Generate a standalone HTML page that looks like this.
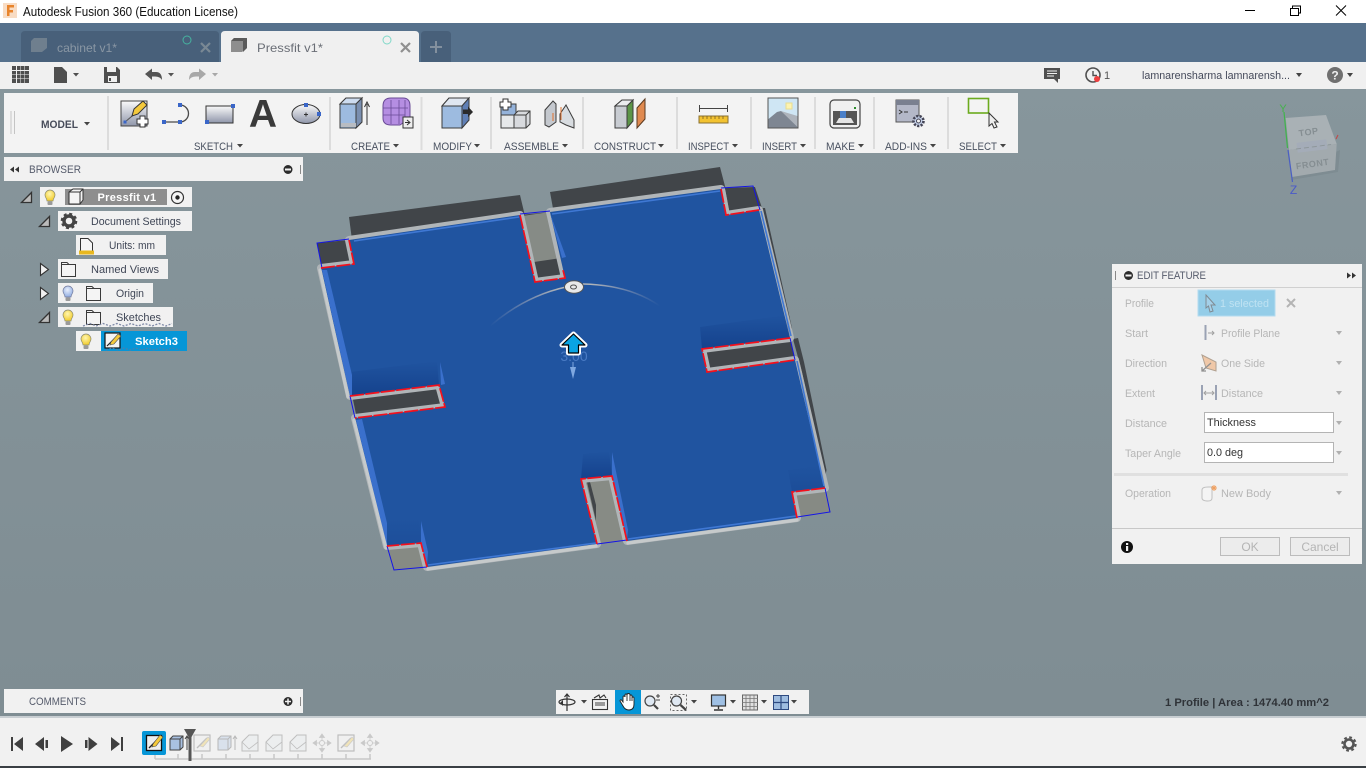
<!DOCTYPE html>
<html><head><meta charset="utf-8"><title>Autodesk Fusion 360</title>
<style>
html,body{margin:0;padding:0;width:1366px;height:768px;overflow:hidden;background:#85939a}
svg{display:block}
text{font-family:"Liberation Sans",sans-serif;font-size:11px;fill:#4a4f5c}
.rl{font-size:11px;fill:#48505f}
.br{font-size:11px;fill:#3f4656}
.dis{font-size:11px;fill:#b6b6b6}
</style></head><body>
<svg width="1366" height="768" viewBox="0 0 1366 768" xmlns="http://www.w3.org/2000/svg">
<defs>
<linearGradient id="bg" x1="0" y1="0" x2="0" y2="1"><stop offset="0" stop-color="#88979d"/><stop offset="1" stop-color="#7e8c92"/></linearGradient>
<linearGradient id="bx" x1="0" y1="0" x2="0" y2="1"><stop offset="0" stop-color="#fafafa"/><stop offset="1" stop-color="#8f96aa"/></linearGradient>
<linearGradient id="shadeU" x1="0" y1="0" x2="0" y2="1"><stop offset="0" stop-color="#103a84" stop-opacity="0"/><stop offset="1" stop-color="#103a84" stop-opacity=".7"/></linearGradient>
<linearGradient id="arcg" gradientUnits="userSpaceOnUse" x1="490" y1="0" x2="660" y2="0"><stop offset="0" stop-color="#aab" stop-opacity="0"/><stop offset=".4" stop-color="#b0b4b8"/><stop offset=".6" stop-color="#b0b4b8"/><stop offset="1" stop-color="#aab" stop-opacity="0"/></linearGradient>
<radialGradient id="bulbY" cx=".45" cy=".35" r=".7"><stop offset="0" stop-color="#fff6b0"/><stop offset="1" stop-color="#f0c820"/></radialGradient>
<radialGradient id="bulbB" cx=".45" cy=".35" r=".7"><stop offset="0" stop-color="#e8effc"/><stop offset="1" stop-color="#8aa8e0"/></radialGradient>
<g id="by"><path d="M-3,3 C-3,0.5 -5,-0.5 -5,-3 A5,5 0 0 1 5,-3 C5,-0.5 3,0.5 3,3 Z" fill="url(#bulbY)" stroke="#8a8a70" stroke-width=".7"/><rect x="-2.5" y="3.5" width="5" height="3.5" rx="1" fill="#9a9a9a"/></g>
<g id="bb"><path d="M-3,3 C-3,0.5 -5,-0.5 -5,-3 A5,5 0 0 1 5,-3 C5,-0.5 3,0.5 3,3 Z" fill="url(#bulbB)" stroke="#70789a" stroke-width=".7"/><rect x="-2.5" y="3.5" width="5" height="3.5" rx="1" fill="#9a9a9a"/></g>
<path id="fold" d="M.5,1.5 H6 L8,3.5 H14.5 V15.5 H.5 Z M.5,3.5 H8" fill="#f4f4f4" stroke="#3a3a3a" stroke-width="1"/>
<g id="mini"><rect x="-8" y="-8" width="16" height="16" fill="#eee" stroke="#555" stroke-width="1.2"/><path d="M-5,5 L5,-5" stroke="#555" stroke-width="1.3"/><path d="M-2,3 L6,-6 L8,-4 L1,4 Z" fill="#f0c840" stroke="#777" stroke-width=".6"/></g>
<g id="mbox"><path d="M-7,-4 L-4,-7 H6 V4 L3,7 H-7 Z" fill="#a9c1e2" stroke="#444" stroke-width="1"/><path d="M-7,-4 H3 V7 M3,-4 L6,-7" fill="none" stroke="#444" stroke-width="1"/><path d="M10,-7 V7 M8,-4 L10,-7 L12,-4" fill="none" stroke="#444" stroke-width="1"/></g>
<g id="mfil"><path d="M-8,-1 L-1,-8 H8 V8 H-8 Z" fill="#e4e8ec" stroke="#555" stroke-width="1"/><path d="M-8,-1 L-1,6 L8,-1" fill="none" stroke="#555" stroke-width=".8"/></g>
<g id="mmov"><circle r="2.5" fill="none" stroke="#777" stroke-width="1"/><path d="M0,-9 L2.5,-5.5 H-2.5 Z M0,9 L2.5,5.5 H-2.5 Z M-9,0 L-5.5,-2.5 V2.5 Z M9,0 L5.5,-2.5 V2.5 Z M0,-6 V-3 M0,3 V6 M-6,0 H-3 M3,0 H6" fill="#777" stroke="#777" stroke-width=".8"/></g>
</defs>

<!-- viewport -->
<rect width="1366" height="768" fill="url(#bg)"/>

<!-- walls -->
<g fill="#414549">
<polygon points="349,217 520,195 525,216 352,240"/>
<polygon points="550,192 720,167 726,190 554,214"/>
<polygon points="725,188 755,187 763,211 730,216"/>
<polygon points="760,208 765,208 792,328 788,338"/>
<polygon points="793,339 798,338 804,362 826.500,470 825,478 802,372"/>
<polygon points="317,243 349,240 354,264 322,268"/>
<polygon points="702,349 790,338 795,360 707,372"/>
<polygon points="352,395 439,385 445,407 357,419"/>
</g>
<polygon points="520,215 550,212 565,278 535,282" fill="#414549"/>
<polygon points="522,216 550,212 561,258 534,262" fill="#868b86"/>
<polygon points="581,479 612,476 627,540 597,544" fill="#878b85"/>
<polygon points="587,482 590,482 596,505 596,521" fill="#414549"/>
<polygon points="792,492 824,489 830,512 797,517" fill="#868a84"/>
<polygon points="387,546 421,543 427,567 394,570" fill="#868a84"/>

<!-- blue sheet -->
<path id="sheet" d="M321,268 L354,264 L349,240 L520,215 L535,282 L565,278 L550,212 L721,189 L726,215 L759,210 L790,338 L702,349 L707,372 L795,360 L825,488 L792,492 L797,518 L627,541 L612,476 L581,479 L597,544 L427,567 L421,543 L387,546 L355,418 L445,407 L439,385 L350,396 Z" fill="#2054a0" stroke="#b0b5b8" stroke-width="8" stroke-linejoin="round" style="paint-order:stroke"/>
<!-- inner shades -->
<polygon points="350,372 437,361 439,385 352,396" fill="url(#shadeU)"/>
<polygon points="700,327 786,315 790,338 702,349" fill="url(#shadeU)"/>
<polygon points="583,454 609,451 612,476 581,479" fill="url(#shadeU)"/>
<polygon points="788,470 822,465 825,488 792,492" fill="url(#shadeU)" opacity=".4"/>
<polygon points="385,520 419,518 421,543 387,546" fill="url(#shadeU)" opacity=".3"/>
<!-- lighter facets -->
<g fill="#3a70cc">
<polygon points="322,270 327,270 352,375 352,395 350,396"/>
<polygon points="356,420 362,419 387,523 387,546"/>
<polygon points="440,362 445,384 441,385"/>
<polygon points="612,452 628,530 627,540 612,476"/>
<polygon points="421,521 428,552 427,566 421,543"/>
<polygon points="550,213 566,257 562,258"/>
</g>
<g fill="none" stroke="#3f78d4" stroke-width="1.6">
<path d="M354,241 L519,217 M552,214 L720,191"/>
<path d="M428,565 L596,543 M628,539 L796,516"/>
<path d="M761,211 L791,336 M797,361 L824,486"/>
</g>
<!-- brighter outer edges -->
<g fill="none" stroke="#c6cacb" stroke-width="3.2" stroke-linecap="round">
<path d="M428,569 L596,546 M628,543 L797,520"/>
<path d="M354,420 L386,548 M320,270 L348,397"/>
</g>
<!-- blue lines -->
<g fill="none" stroke="#1414e6" stroke-width="1">
<path d="M322,268 L317,243 L349,239"/>
<path d="M520,214 L550,211"/>
<path d="M721,188 L753,186 L760,210"/>
<path d="M790,338 L795,360"/>
<path d="M825,488 L830,512 L797,517"/>
<path d="M597,544 L627,540"/>
<path d="M427,567 L394,570 L387,546"/>
<path d="M355,418 L350,396"/>
</g>
<!-- red lines -->
<g fill="none" stroke="#f4101c" stroke-width="1.7" stroke-dasharray="14 1.5">
<path d="M321,268 L354,264 L349,240"/>
<path d="M520,215 L535,282 L565,278 L563,270"/>
<path d="M721,189 L726,215 L759,210"/>
<path d="M790,338 L702,349 L707,372 L795,360"/>
<path d="M825,488 L792,492 L797,518"/>
<path d="M627,541 L612,476 L581,479 L597,544"/>
<path d="M427,567 L421,543 L387,546"/>
<path d="M350,396 L439,385 L445,407 L355,418"/>
</g>
<!-- arc and manipulator -->
<path d="M490,326 Q525,296 566,287 M583,284 Q630,285 660,306" fill="none" stroke="url(#arcg)" stroke-width="1.5"/>
<ellipse cx="574" cy="287" rx="9.5" ry="6.2" fill="#e9e9e9" stroke="#555" stroke-width="1"/>
<ellipse cx="573.5" cy="287" rx="3" ry="2" fill="none" stroke="#555" stroke-width="1"/>
<text x="574" y="361" text-anchor="middle" style="font-size:14px;fill:#4a7bc4">3.00</text>
<path d="M573,362 V376" stroke="#7fa8e0" stroke-width="1"/>
<path d="M570,367 L573,379 L576,367 Z" fill="#7fa8e0"/>
<path d="M573.500,334 L585,345 H578.500 V353 H568.500 V345 H562 Z" fill="#fff" stroke="#fff" stroke-width="5" stroke-linejoin="round"/>
<path d="M573.500,334 L585,345 H578.500 V353 H568.500 V345 H562 Z" fill="#0aa4e4" stroke="#000" stroke-width="1.200" stroke-linejoin="round"/>

<!-- title bar -->
<rect width="1366" height="23" fill="#fff"/>
<rect x="3" y="3" width="14" height="15" fill="#f8dcc4"/>
<path d="M7,5 H14 V7.5 H9.5 V10 H13 V12.5 H9.5 V16 H7 Z" fill="#e8842c"/>
<text x="23" y="16" textLength="215" lengthAdjust="spacingAndGlyphs" style="font-size:12.5px;fill:#111">Autodesk Fusion 360 (Education License)</text>
<path d="M1245,10.5 H1255" stroke="#000" stroke-width="1"/>
<path d="M1290.5,8.5 H1298.5 V15.5 H1290.5 Z M1292.5,8.5 V6 H1300.5 V13 H1298.5" fill="none" stroke="#000" stroke-width="1"/>
<path d="M1336,5.5 L1346,15.5 M1346,5.5 L1336,15.5" stroke="#000" stroke-width="1"/>

<!-- tab bar -->
<rect y="23" width="1366" height="39" fill="#56718c"/>
<path d="M21,62 V35 Q21,31 25,31 H215 Q219,31 219,35 V62 Z" fill="#48607a"/>
<path d="M221,62 V35 Q221,31 225,31 H415 Q419,31 419,35 V62 Z" fill="#f0f0f0"/>
<path d="M421,62 V35 Q421,31 425,31 H447 Q451,31 451,35 V62 Z" fill="#48607a"/>
<path d="M31,41 L34,38 H47 V48 L42,52 H31 Z" fill="#6f7f8e"/>
<path d="M231,41 L234,38 H247 V48 L242,52 H231 Z" fill="#8e8e8e"/>
<path d="M231,41 L234,38 H247 L243,41 Z" fill="#5a5a5a"/>
<path d="M243,41 L247,38 V48 L243,52 Z" fill="#5a5a5a"/>
<text x="57" y="52" textLength="60" lengthAdjust="spacingAndGlyphs" style="font-size:12px;fill:#8a97a4">cabinet v1*</text>
<text x="257" y="52" textLength="66" lengthAdjust="spacingAndGlyphs" style="font-size:12px;fill:#6a6e76;font-weight:400">Pressfit v1*</text>
<circle cx="187" cy="40" r="4" fill="none" stroke="#46b3a0" stroke-width="1"/>
<circle cx="387" cy="40" r="4" fill="none" stroke="#7fd8c8" stroke-width="1"/>
<path d="M201,43 L210,52 M210,43 L201,52" stroke="#7a8894" stroke-width="2.2"/>
<path d="M401,43 L410,52 M410,43 L401,52" stroke="#909090" stroke-width="2.2"/>
<path d="M436,41 V53 M430,47 H442" stroke="#83909e" stroke-width="2"/>

<!-- top toolbar -->
<rect y="62" width="1366" height="27" fill="#f0f0f0"/>
<g fill="#4f4f4f">
<rect x="12" y="66" width="4" height="4"/><rect x="17" y="66" width="3.5" height="4"/><rect x="21" y="66" width="3.5" height="4"/><rect x="25" y="66" width="4" height="4"/>
<rect x="12" y="71" width="4" height="3.5"/><rect x="17" y="71" width="3.5" height="3.5"/><rect x="21" y="71" width="3.5" height="3.5"/><rect x="25" y="71" width="4" height="3.5"/>
<rect x="12" y="75" width="4" height="3.5"/><rect x="17" y="75" width="3.5" height="3.5"/><rect x="21" y="75" width="3.5" height="3.5"/><rect x="25" y="75" width="4" height="3.5"/>
<rect x="12" y="79" width="4" height="4"/><rect x="17" y="79" width="3.5" height="4"/><rect x="21" y="79" width="3.5" height="4"/><rect x="25" y="79" width="4" height="4"/>
<path d="M54,67 H62 L67,72 V83 H54 Z"/>
<path d="M73,73 H79 L76,76.5 Z"/>
<path d="M104,67 H117 L120,70 V83 H104 Z"/>
</g>
<rect x="107" y="67" width="9" height="5" fill="#f0f0f0"/>
<rect x="108" y="76" width="9" height="6" fill="#f0f0f0"/><rect x="109" y="78" width="2" height="3" fill="#4f4f4f"/>
<path d="M145,74 L152,68.5 V72 H156 Q162,72 162,80 Q160,76.5 155,76.5 H152 V80 Z" fill="#555"/>
<path d="M168,73 H174 L171,76.5 Z" fill="#555"/>
<path d="M206,74 L199,68.5 V72 H195 Q189,72 189,80 Q191,76.5 196,76.5 H199 V80 Z" fill="#a8a8a8"/>
<path d="M212,73 H218 L215,76.5 Z" fill="#a8a8a8"/>
<!-- top right -->
<path d="M1044,68 H1060 V79 H1058 V83 L1054,79 H1044 Z" fill="#4f4f4f"/>
<path d="M1047,71 H1057 M1047,73.5 H1057 M1047,76 H1054" stroke="#f0f0f0" stroke-width="1"/>
<circle cx="1093" cy="75" r="7" fill="none" stroke="#4f4f4f" stroke-width="1.6"/>
<path d="M1093,71 V75.5 H1097" fill="none" stroke="#4f4f4f" stroke-width="1.4"/>
<circle cx="1097" cy="79" r="3" fill="#ee3f3f"/>
<text x="1104" y="79" style="font-size:11px;fill:#555">1</text>
<text x="1142" y="79" textLength="148" lengthAdjust="spacingAndGlyphs" style="font-size:11px;fill:#44495a">lamnarensharma lamnarensh...</text>
<path d="M1296,73 H1302 L1299,77 Z" fill="#444"/>
<circle cx="1335" cy="75" r="8" fill="#707070"/>
<text x="1335" y="79.500" text-anchor="middle" style="font-size:12px;font-weight:700;fill:#f0f0f0">?</text>
<path d="M1347,73 H1353 L1350,77 Z" fill="#444"/>

<!-- ribbon -->
<rect x="4" y="93" width="1014" height="60" fill="#f3f3f3"/>
<g stroke="#dcdcdc" stroke-width="2">
<path d="M108,96 V150 M330,97 V150 M421.500,97 V150 M491,97 V149 M583,97 V149 M677,97 V149 M751,97 V149 M815,97 V149 M874,97 V149 M948,97 V149"/>
</g>
<path d="M11,111 V134 M14.500,111 V134" stroke="#c4c4c4" stroke-width="1"/>
<text x="41" y="128" textLength="37" lengthAdjust="spacingAndGlyphs" style="font-size:11px;font-weight:700;fill:#474c5a">MODEL</text>
<path d="M84,122 H90 L87,125.500 Z" fill="#444"/>

<!-- sketch icons -->
<rect x="121" y="101" width="26" height="25" fill="url(#bx)" stroke="#444" stroke-width="1"/>
<path d="M125,122 L137,112" stroke="#555" stroke-width="1"/>
<rect x="123.500" y="120.500" width="3" height="3" fill="#3a66c8"/>
<path d="M134,109 L143,101 L147,105 L138,114 L132,116 Z" fill="#f4c93c" stroke="#333" stroke-width="1"/>
<path d="M140,116 H145 V119 H148 V124 H145 V127 H140 V124 H137 V119 H140 Z" fill="#fff" stroke="#333" stroke-width="1"/>
<path d="M164,122 H180 A8.500,8.500 0 0 0 180,105" fill="none" stroke="#4a4a4a" stroke-width="1.3"/>
<g fill="#3a66c8"><rect x="162" y="120" width="4" height="4"/><rect x="178" y="120" width="4" height="4"/><rect x="178" y="103" width="4" height="4"/></g>
<rect x="206" y="106" width="27" height="17" fill="url(#bx)" stroke="#333" stroke-width="1"/>
<g fill="#3a66c8"><rect x="205" y="120" width="4" height="4"/><rect x="231" y="104" width="4" height="4"/></g>
<text x="263" y="127" text-anchor="middle" style="font-size:39px;font-weight:700;fill:#3a3a3a">A</text>
<ellipse cx="306" cy="114" rx="14" ry="9.500" fill="url(#bx)" stroke="#333" stroke-width="1"/>
<path d="M304,114.500 H308 M306,112.500 V116.500" stroke="#333" stroke-width="1"/>
<g fill="#3a66c8"><rect x="304" y="103" width="4" height="4"/><rect x="317" y="112" width="4" height="4"/></g>
<text x="194" y="150" textLength="39" lengthAdjust="spacingAndGlyphs" class="rl">SKETCH</text><path d="M237,144 H243 L240,147.500 Z" fill="#444"/>

<!-- create -->
<path d="M340,104 L346,98 H362 V122 L356,128 H340 Z" fill="#9dbbe0" stroke="#3c3c3c" stroke-width="1"/>
<path d="M340,104 L346,98 H362 L356,104 Z" fill="#cddcf0" stroke="#3c3c3c" stroke-width="1"/>
<path d="M356,104 L362,98 V122 L356,128 Z" fill="#7a8fb0" stroke="#3c3c3c" stroke-width="1"/>
<rect x="341" y="123" width="15" height="4" fill="#b8bcc2"/>
<path d="M367,125 V104 M364.500,107 L367,102 L369.500,107" fill="none" stroke="#333" stroke-width="1"/>
<path d="M383,106 Q383,98 391,98 H403 Q410,98 410,106 V118 L400,125 H391 Q383,125 383,118 Z" fill="#b58ee2" stroke="#6a4b96" stroke-width="1"/>
<path d="M383,108 H408 M383,115 H405 M391,100 V124 M399,100 V124 M405,100 V118" stroke="#6a4b96" stroke-width=".8" fill="none"/>
<rect x="403" y="117" width="10" height="11" fill="#eee" stroke="#333" stroke-width="1"/>
<path d="M405,122.500 H409 M407,120 L410,122.500 L407,125" fill="none" stroke="#333" stroke-width="1"/>
<text x="351" y="150" textLength="39" lengthAdjust="spacingAndGlyphs" class="rl">CREATE</text><path d="M393,144 H399 L396,147.500 Z" fill="#444"/>

<!-- modify -->
<path d="M442,106 L449,98 H469 V120 L462,128 H442 Z" fill="#9dbbe0" stroke="#3c3c3c" stroke-width="1"/>
<path d="M442,106 L449,98 H469 L462,106 Z" fill="#dfe6f0" stroke="#3c3c3c" stroke-width="1"/>
<path d="M462,106 L469,98 V120 L462,128 Z" fill="#5f7fb5" stroke="#3c3c3c" stroke-width="1"/>
<path d="M463,109.500 H468 V106.500 L473,112 L468,117 V114 H463 Z" fill="#2a2a2a"/>
<text x="433" y="150" textLength="39" lengthAdjust="spacingAndGlyphs" class="rl">MODIFY</text><path d="M474,144 H480 L477,147.500 Z" fill="#444"/>

<!-- assemble -->
<rect x="501" y="104" width="15" height="11" fill="#94b2da" stroke="#3c3c3c" stroke-width="1"/>
<rect x="501" y="115" width="13" height="13" fill="#e6e8ea" stroke="#3c3c3c" stroke-width="1"/>
<path d="M514,115 L518,111 H530 V124 L526,128 H514 Z" fill="#d8dade" stroke="#3c3c3c" stroke-width="1"/>
<path d="M514,115 H526 V128 M526,115 L530,111" fill="none" stroke="#3c3c3c" stroke-width="1"/>
<path d="M503,99 H508 V102 H511 V107 H508 V110 H503 V107 H500 V102 H503 Z" fill="#fff" stroke="#333" stroke-width="1"/>
<path d="M545,110 L553,101 L556,104 V122 L549,127 L545,125 Z" fill="#c4c8ce" stroke="#3c3c3c" stroke-width="1"/>
<path d="M560,114 L566,105 L574,120 V128 L566,125 L560,122 Z" fill="#d8dce0" stroke="#3c3c3c" stroke-width="1"/>
<path d="M561,107 V120 M553,113 V121" stroke="#e0702c" stroke-width="1"/>
<text x="504" y="150" textLength="55" lengthAdjust="spacingAndGlyphs" class="rl">ASSEMBLE</text><path d="M562,144 H568 L565,147.500 Z" fill="#444"/>

<!-- construct -->
<path d="M615,106 L622,100 H633 V121 L627,128 H615 Z" fill="#c8ccd2" stroke="#3c3c3c" stroke-width="1"/>
<path d="M627,106 L633,100 V121 L627,128 Z" fill="#5c9548" stroke="#3c3c3c" stroke-width="1"/>
<path d="M615,106 L622,100 H633 L627,106 Z" fill="#eaecee" stroke="#3c3c3c" stroke-width="1"/>
<path d="M637,108 L645,99 V119 L637,128 Z" fill="#e08a50" stroke="#5a3a20" stroke-width="1"/>
<text x="594" y="150" textLength="62" lengthAdjust="spacingAndGlyphs" class="rl">CONSTRUCT</text><path d="M658,144 H664 L661,147.500 Z" fill="#444"/>

<!-- inspect -->
<path d="M699.500,105 V112 M727.500,105 V112 M699.500,108.500 H727.500" stroke="#444" stroke-width="1" fill="none"/>
<rect x="699" y="116" width="29" height="7" fill="#f2c230" stroke="#8a7030" stroke-width="1"/>
<path d="M703,116 V119 M707,116 V119 M711,116 V119 M715,116 V119 M719,116 V119 M723,116 V119" stroke="#7a6020" stroke-width=".8"/>
<text x="688" y="150" textLength="41" lengthAdjust="spacingAndGlyphs" class="rl">INSPECT</text><path d="M732,144 H738 L735,147.500 Z" fill="#444"/>

<!-- insert -->
<rect x="768" y="98" width="30" height="30" fill="#cfe6f4" stroke="#555" stroke-width="1"/>
<rect x="786" y="103" width="6" height="6" fill="#fdf3b0" stroke="#e8dc90" stroke-width="1"/>
<path d="M768.500,127.500 V119 L777,112 L781,111 L797.500,124 V127.500 Z" fill="#7e8692"/>
<path d="M781,111 L797.500,116 V127 Z" fill="#aeb4bc"/>
<text x="762" y="150" textLength="35" lengthAdjust="spacingAndGlyphs" class="rl">INSERT</text><path d="M800,144 H806 L803,147.500 Z" fill="#444"/>

<!-- make -->
<rect x="830" y="100" width="30" height="28" rx="4" fill="#f0f0f0" stroke="#444" stroke-width="1.2"/>
<rect x="833" y="111" width="24" height="14" fill="#555"/>
<rect x="840" y="111" width="6" height="8" fill="#4a7fc8"/>
<path d="M836,123 L839,118 H851 L854,123 Z" fill="#e4e4e4"/>
<rect x="854" y="107" width="2" height="2" fill="#2a8a2a"/>
<text x="826" y="150" textLength="29" lengthAdjust="spacingAndGlyphs" class="rl">MAKE</text><path d="M858,144 H864 L861,147.500 Z" fill="#444"/>

<!-- add-ins -->
<rect x="896" y="100" width="23" height="22" fill="#b4b8c8" stroke="#555" stroke-width="1"/>
<rect x="896" y="100" width="23" height="5" fill="#7a8090"/>
<path d="M899,110 L902,112 L899,114 M904,112 H908" fill="none" stroke="#333" stroke-width="1"/>
<circle cx="918.500" cy="121" r="5" fill="#c4d0e8" stroke="#445" stroke-width="2.600" stroke-dasharray="2.200 1.300"/>
<circle cx="918.500" cy="121" r="2" fill="#f3f3f3" stroke="#445" stroke-width="1"/>
<text x="885" y="150" textLength="42" lengthAdjust="spacingAndGlyphs" class="rl">ADD-INS</text><path d="M930,144 H936 L933,147.500 Z" fill="#444"/>

<!-- select -->
<rect x="968.500" y="98.500" width="20" height="14.500" fill="none" stroke="#6cab1e" stroke-width="1.600"/>
<path d="M989,113 L998,122 H994.500 L997,127 L994,128 L992,123.500 L989,126 Z" fill="#eee" stroke="#333" stroke-width="1"/>
<text x="959" y="150" textLength="38" lengthAdjust="spacingAndGlyphs" class="rl">SELECT</text><path d="M1000,144 H1006 L1003,147.500 Z" fill="#444"/>

<!-- browser -->
<rect x="4" y="157" width="299" height="24" fill="#f1f1f1"/>
<path d="M14,166.500 L10,169.500 L14,172.500 Z M19,166.500 L15,169.500 L19,172.500 Z" fill="#333"/>
<text x="29" y="173" textLength="52" lengthAdjust="spacingAndGlyphs" class="br" style="fill:#555b6b">BROWSER</text>
<circle cx="288" cy="169.500" r="4.500" fill="#2b2b2b"/><rect x="285" y="168.500" width="6" height="2" fill="#f1f1f1"/>
<path d="M300.500,165 V174" stroke="#888" stroke-width="1"/>

<g fill="#f1f1f1">
<rect x="40" y="187" width="152" height="20"/>
<rect x="58" y="211" width="134" height="20"/>
<rect x="76" y="235" width="90" height="20"/>
<rect x="58" y="259" width="110" height="20"/>
<rect x="58" y="283" width="95" height="20"/>
<rect x="58" y="307" width="115" height="20"/>
<rect x="76" y="331" width="111" height="20"/>
</g>
<rect x="65" y="189" width="102" height="16" fill="#8e8e8e"/>
<rect x="101" y="331" width="86" height="20" fill="#0696d7"/>

<!-- triangles -->
<path d="M21.500,202.500 L31.500,192.500 V202.500 Z" fill="#bbb" stroke="#333" stroke-width="1.300"/>
<path d="M39.500,226.500 L49.500,216.500 V226.500 Z" fill="#bbb" stroke="#333" stroke-width="1.300"/>
<path d="M39.500,322.500 L49.500,312.500 V322.500 Z" fill="#bbb" stroke="#333" stroke-width="1.300"/>
<path d="M40.500,263.500 L48.500,269.500 L40.500,275.500 Z" fill="#f1f1f1" stroke="#333" stroke-width="1.100"/>
<path d="M40.500,287.500 L48.500,293.500 L40.500,299.500 Z" fill="#f1f1f1" stroke="#333" stroke-width="1.100"/>

<use href="#by" x="50" y="198"/>
<path d="M69,192 L73,189 H83 V200 L80,204 H69 Z M69,192 H80 V204 M80,192 L83,189" fill="#f4f4f4" stroke="#333" stroke-width="1"/>
<text x="127" y="201" text-anchor="middle" style="font-size:11px;font-weight:700;fill:#fff;letter-spacing:.3px">Pressfit v1</text>
<circle cx="177.500" cy="197.500" r="6" fill="#f4f4f4" stroke="#333" stroke-width="1.200"/><circle cx="177.500" cy="197.500" r="2.200" fill="#222"/>

<circle cx="69" cy="221" r="5" fill="none" stroke="#444" stroke-width="3.400"/>
<circle cx="69" cy="221" r="7.200" fill="none" stroke="#444" stroke-width="2.200" stroke-dasharray="3 2.650"/>
<text x="91" y="225" textLength="90" lengthAdjust="spacingAndGlyphs" class="br">Document Settings</text>

<path d="M80.500,238.500 H88 L92.500,243 V251.500 H80.500 Z" fill="#f6f6f6" stroke="#333" stroke-width="1"/>
<rect x="79" y="250.500" width="15" height="4" fill="#e8b820"/>
<text x="109" y="249" textLength="46" lengthAdjust="spacingAndGlyphs" class="br">Units: mm</text>

<use href="#fold" x="61" y="261"/>
<text x="91" y="273" textLength="68" lengthAdjust="spacingAndGlyphs" class="br">Named Views</text>

<use href="#bb" x="68" y="294"/>
<use href="#fold" x="86" y="285"/>
<text x="116" y="297" textLength="28" lengthAdjust="spacingAndGlyphs" class="br">Origin</text>

<use href="#by" x="68" y="318"/>
<use href="#fold" x="86" y="309"/>
<text x="116" y="321" textLength="45" lengthAdjust="spacingAndGlyphs" class="br">Sketches</text>
<path d="M83,326 L90,323.500 L96,326 L103,323.500 L110,326 L117,323.500 L124,326 L131,323.500 L138,326 L145,323.500 L152,326 L159,323.500 L166,326 L172,323.500" fill="none" stroke="#7f8aa8" stroke-width="1.300" stroke-dasharray="2 1.500"/>

<use href="#by" x="86" y="342"/>
<rect x="105" y="333" width="15" height="15" fill="#f4f4f4" stroke="#111" stroke-width="1.200"/>
<path d="M107,346 L116,337" stroke="#222" stroke-width="1.200"/>
<path d="M111,342 L118,334 L121,336 L114,344 L110,345 Z" fill="#f4c93c" stroke="#555" stroke-width=".6"/>
<text x="135" y="345" textLength="43" lengthAdjust="spacingAndGlyphs" style="font-size:11px;font-weight:700;fill:#fff">Sketch3</text>
<path d="M106,350 L112,348 L118,350 L124,348 L130,350 L136,348 L142,350 L148,348 L154,350 L160,348 L166,350 L172,348 L180,350" fill="none" stroke="#4f7fa8" stroke-width="1.200" stroke-dasharray="2 1.500"/>

<!-- viewcube -->
<polygon points="1291,180 1338,172 1340,150 1296,170" fill="#6f7b80" opacity=".35"/>
<polygon points="1285.700,118 1326,115 1336.700,144 1289,150" fill="#a9b1b5"/>
<polygon points="1289,150 1336.700,144 1335,170 1292,177" fill="#a2aaae"/>
<rect x="1297" y="141" width="30" height="10" fill="#a4acb8" transform="rotate(-7 1312 146)"/>
<path d="M1296,149 L1331,144.500" stroke="#8e979b" stroke-width="1" stroke-dasharray="5 3"/>
<text x="1309" y="135" text-anchor="middle" transform="rotate(-8 1309 135)" style="font-size:9px;font-weight:700;fill:#858e92;letter-spacing:.5px">TOP</text>
<text x="1313" y="167" text-anchor="middle" transform="rotate(-8 1313 167)" style="font-size:9px;font-weight:700;fill:#858e92;letter-spacing:.5px">FRONT</text>
<path d="M1284,112 L1287.500,148" stroke="#3fb54a" stroke-width="1.200"/>
<path d="M1288,150 L1292.500,182" stroke="#4a5fc4" stroke-width="1.200"/>
<path d="M1336,139 L1338,135" stroke="#c84444" stroke-width="1"/>
<text x="1283" y="112" text-anchor="middle" style="font-size:11px;fill:#43b34a">Y</text>
<text x="1293.500" y="194" text-anchor="middle" style="font-size:12px;fill:#4a5ac8">Z</text>

<!-- edit feature -->
<rect x="1112" y="264" width="250" height="300" fill="#f1f1f1"/>
<path d="M1115.500,271 V280" stroke="#888" stroke-width="1"/>
<circle cx="1128.500" cy="275.500" r="4.500" fill="#2b2b2b"/><rect x="1125.500" y="274.500" width="6" height="2" fill="#f1f1f1"/>
<text x="1137" y="279" textLength="69" lengthAdjust="spacingAndGlyphs" class="br" style="fill:#555b6b">EDIT FEATURE</text>
<path d="M1347,272.500 L1351,275.500 L1347,278.500 Z M1352,272.500 L1356,275.500 L1352,278.500 Z" fill="#333"/>
<path d="M1112,287.500 H1362" stroke="#d0d0d0" stroke-width="1"/>
<rect x="1198" y="290" width="77" height="26" fill="#94cde8" stroke="#b4dcf0" stroke-width="1"/>
<path d="M1206,295 L1215,305 H1211 L1213,311 L1210,312 L1208.500,306 L1206,308 Z" fill="#a4d0e8" stroke="#7f8a92" stroke-width="1"/>
<text x="1220" y="307" textLength="49" lengthAdjust="spacingAndGlyphs" style="font-size:11px;fill:#bfe2f2">1 selected</text>
<path d="M1287,299 L1295,307 M1295,299 L1287,307" stroke="#b4b4b4" stroke-width="2"/>
<text x="1125" y="307" class="dis" textLength="29" lengthAdjust="spacingAndGlyphs">Profile</text>
<text x="1125" y="337" class="dis" textLength="23" lengthAdjust="spacingAndGlyphs">Start</text>
<text x="1125" y="367" class="dis" textLength="42" lengthAdjust="spacingAndGlyphs">Direction</text>
<text x="1125" y="397" class="dis" textLength="30" lengthAdjust="spacingAndGlyphs">Extent</text>
<text x="1125" y="427" class="dis" textLength="42" lengthAdjust="spacingAndGlyphs">Distance</text>
<text x="1125" y="457" class="dis" textLength="56" lengthAdjust="spacingAndGlyphs">Taper Angle</text>
<text x="1125" y="497" class="dis" textLength="46" lengthAdjust="spacingAndGlyphs">Operation</text>
<path d="M1205.500,325 V340" stroke="#9aa2b4" stroke-width="2"/>
<path d="M1208,333 H1214 M1212,331 L1214,333 L1212,335" fill="none" stroke="#a0a0a0" stroke-width="1"/>
<text x="1221" y="337" class="dis" textLength="59" lengthAdjust="spacingAndGlyphs">Profile Plane</text>
<path d="M1202,355 L1216,362 V371 L1206,368 Z" fill="#f0c8a8" stroke="#b0a090" stroke-width="1"/>
<path d="M1202,371 L1211,363 M1202,367 V371 H1206" fill="none" stroke="#909090" stroke-width="1.300"/>
<text x="1221" y="367" class="dis" textLength="44" lengthAdjust="spacingAndGlyphs">One Side</text>
<path d="M1202,385 V400 M1216,385 V400" stroke="#9aa2b4" stroke-width="2"/>
<path d="M1204,393 H1214 M1206,391 L1204,393 L1206,395 M1212,391 L1214,393 L1212,395" fill="none" stroke="#a0a0a0" stroke-width="1"/>
<text x="1221" y="397" class="dis" textLength="42" lengthAdjust="spacingAndGlyphs">Distance</text>
<rect x="1204.500" y="412.500" width="129" height="20" fill="#fff" stroke="#b4b4b4" stroke-width="1"/>
<text x="1207" y="426" textLength="49" lengthAdjust="spacingAndGlyphs" style="font-size:11px;fill:#333">Thickness</text>
<rect x="1204.500" y="442.500" width="129" height="20" fill="#fff" stroke="#b4b4b4" stroke-width="1"/>
<text x="1207" y="456" textLength="36" lengthAdjust="spacingAndGlyphs" style="font-size:11px;fill:#333">0.0 deg</text>
<g fill="#b0b0b0">
<path d="M1336,331 H1342 L1339,335 Z"/><path d="M1336,361 H1342 L1339,365 Z"/><path d="M1336,391 H1342 L1339,395 Z"/>
<path d="M1336,421 H1342 L1339,425 Z"/><path d="M1336,451 H1342 L1339,455 Z"/><path d="M1336,491 H1342 L1339,495 Z"/>
</g>
<rect x="1114" y="473" width="234" height="3" fill="#e0e0e0"/>
<path d="M1202,490 Q1202,487 1208,487 H1212 V498 Q1212,501 1208,501 Q1202,501 1202,498 Z" fill="#f4f4f4" stroke="#c0c0c0" stroke-width="1"/>
<path d="M1214,485 V491 M1211,488 H1217 M1212,486 L1216,490 M1216,486 L1212,490" stroke="#f0a060" stroke-width="1"/>
<text x="1221" y="497" class="dis" textLength="50" lengthAdjust="spacingAndGlyphs">New Body</text>
<path d="M1112,528.500 H1362" stroke="#c8c8c8" stroke-width="1"/>
<circle cx="1127" cy="547" r="6" fill="#111"/>
<rect x="1126" y="546" width="2.200" height="5" fill="#f1f1f1"/><rect x="1126" y="543" width="2.200" height="2" fill="#f1f1f1"/>
<rect x="1220.500" y="537.500" width="59" height="18" fill="#ececec" stroke="#bcbcbc" stroke-width="1"/>
<rect x="1290.500" y="537.500" width="59" height="18" fill="#ececec" stroke="#bcbcbc" stroke-width="1"/>
<text x="1250" y="551" text-anchor="middle" style="font-size:12px;fill:#b4b4b4">OK</text>
<text x="1320" y="551" text-anchor="middle" style="font-size:12px;fill:#b4b4b4">Cancel</text>

<!-- comments -->
<rect x="4" y="689" width="299" height="24" fill="#f1f1f1"/>
<text x="29" y="705" textLength="57" lengthAdjust="spacingAndGlyphs" class="br" style="fill:#555b6b">COMMENTS</text>
<circle cx="288" cy="701.500" r="4.500" fill="#2b2b2b"/><path d="M285,701.500 H291 M288,698.500 V704.500" stroke="#f1f1f1" stroke-width="1.500"/>
<path d="M300.500,697 V706" stroke="#888" stroke-width="1"/>

<!-- nav bar -->
<rect x="556" y="690" width="253" height="24" fill="#f1f1f1"/>
<rect x="615" y="690" width="26" height="24" fill="#0696d7"/>
<ellipse cx="567" cy="702" rx="8" ry="3" fill="none" stroke="#333" stroke-width="1.200"/>
<path d="M567,694 V711 M564.500,697 L567,694 L569.500,697" fill="none" stroke="#333" stroke-width="1.200"/>
<path d="M560,703 L563,700 V706 Z" fill="#333"/>
<path d="M581,700 H587 L584,703.500 Z" fill="#444"/>
<rect x="592.500" y="699.500" width="15" height="10" fill="#f1f1f1" stroke="#333" stroke-width="1.100"/>
<rect x="595" y="702" width="10" height="4" fill="#999"/>
<path d="M594,698 L599,695 L600,698 L604,695 L606,698" fill="none" stroke="#333" stroke-width="1.100"/>
<path d="M623,702 V697 Q623,696 624,696 Q625,696 625,697 V695 Q625,694 626,694 Q627,694 627,695 V701 V695 Q627,693.500 628.500,693.500 Q630,693.500 630,695 V701 V696 Q630,695 631,695 Q632,695 632,696 V701 V698 Q632,697 633,697 Q634,697 634,698 V704 Q634,710 629,710 Q625,710 623,706 L620,701 Q620,699.500 621.500,700 Z" fill="#fff" stroke="#222" stroke-width=".9"/>
<circle cx="650" cy="701" r="5" fill="#dfe8f2" stroke="#444" stroke-width="1.200"/>
<path d="M654,705 L658,709" stroke="#444" stroke-width="2.200"/>
<path d="M656,696 H660 M658,694 V698 M656,700 H660" stroke="#444" stroke-width="1"/>
<rect x="670.500" y="694.500" width="16" height="16" fill="none" stroke="#666" stroke-width="1" stroke-dasharray="2 2"/>
<circle cx="676.500" cy="701" r="5" fill="#dfe8f2" stroke="#444" stroke-width="1.200"/>
<path d="M680.500,705 L686,710" stroke="#444" stroke-width="2.200"/>
<path d="M691,700 H697 L694,703.500 Z" fill="#444"/>
<rect x="711.500" y="695" width="14" height="11" fill="#9fc0e4" stroke="#333" stroke-width="1.200"/>
<path d="M718.500,706 V709 M714,710 H723" stroke="#333" stroke-width="1.400"/>
<path d="M730,700 H736 L733,703.500 Z" fill="#444"/>
<rect x="742.500" y="695" width="15" height="15" fill="#e0e0e0" stroke="#666" stroke-width="1"/>
<path d="M746,695 V710 M750,695 V710 M754,695 V710 M742,698.500 H758 M742,702.500 H758 M742,706.500 H758" stroke="#777" stroke-width=".8"/>
<path d="M761,700 H767 L764,703.500 Z" fill="#444"/>
<rect x="773.500" y="695.500" width="15" height="14" fill="#9fbde0" stroke="#2e4a80" stroke-width="1"/>
<path d="M781,695.500 V709.500 M773.500,702.500 H788.500" stroke="#2e4a80" stroke-width="1.200"/>
<path d="M791,700 H797 L794,703.500 Z" fill="#444"/>

<text x="1165" y="706" textLength="164" lengthAdjust="spacingAndGlyphs" style="font-size:11px;font-weight:700;fill:#2f3338">1 Profile | Area : 1474.40 mm^2</text>

<!-- timeline -->
<rect y="716" width="1366" height="2" fill="#c8ced2"/>
<rect y="718" width="1366" height="48" fill="#f1f1f1"/>
<rect y="766" width="1366" height="2" fill="#3a3f44"/>
<g fill="#3f3f3f">
<path d="M11,737 H13 V751 H11 Z M23,737 V751 L14,744 Z"/>
<path d="M44,737 V751 L35,744 Z M45.500,740 H48 V748 H45.500 Z"/>
<path d="M61,736 L73,744 L61,752 Z"/>
<path d="M85,740 H87.500 V748 H85 Z M88.500,737 V751 L97.500,744 Z"/>
<path d="M111,737 L120,744 L111,751 Z M121,737 H123 V751 H121 Z"/>
</g>
<path d="M155,759 H371 M155,754 V759 M178,754 V759 M202,754 V759 M226,754 V759 M250,754 V759 M274,754 V759 M298,754 V759 M322,754 V759 M346,754 V759 M370,754 V759" fill="none" stroke="#c8c8c8" stroke-width="1.500"/>
<rect x="142" y="731" width="24" height="24" rx="2" fill="#0696d7"/>
<rect x="146.500" y="735.500" width="15" height="15" fill="#eee" stroke="#111" stroke-width="1.300"/>
<path d="M149,748 L158,739" stroke="#222" stroke-width="1.300"/>
<path d="M153,744 L160,735 L163,737 L156,746 L152,747 Z" fill="#f4c93c" stroke="#444" stroke-width=".6"/>
<use href="#mbox" x="177" y="743"/>
<g opacity=".32">
<use href="#mini" x="202" y="743"/>
<use href="#mbox" x="225" y="743"/>
<use href="#mfil" x="250" y="743"/>
<use href="#mfil" x="274" y="743"/>
<use href="#mfil" x="298" y="743"/>
<use href="#mmov" x="322" y="743"/>
<use href="#mini" x="346" y="743"/>
<use href="#mmov" x="370" y="743"/>
</g>
<path d="M184,729 H196 L191.500,737 V761 H188.500 V737 Z" fill="#555"/>
<circle cx="1349" cy="744" r="4.500" fill="none" stroke="#555" stroke-width="2.600"/>
<circle cx="1349" cy="744" r="6.700" fill="none" stroke="#555" stroke-width="2" stroke-dasharray="2.800 2.460"/>
</svg>
</body></html>
